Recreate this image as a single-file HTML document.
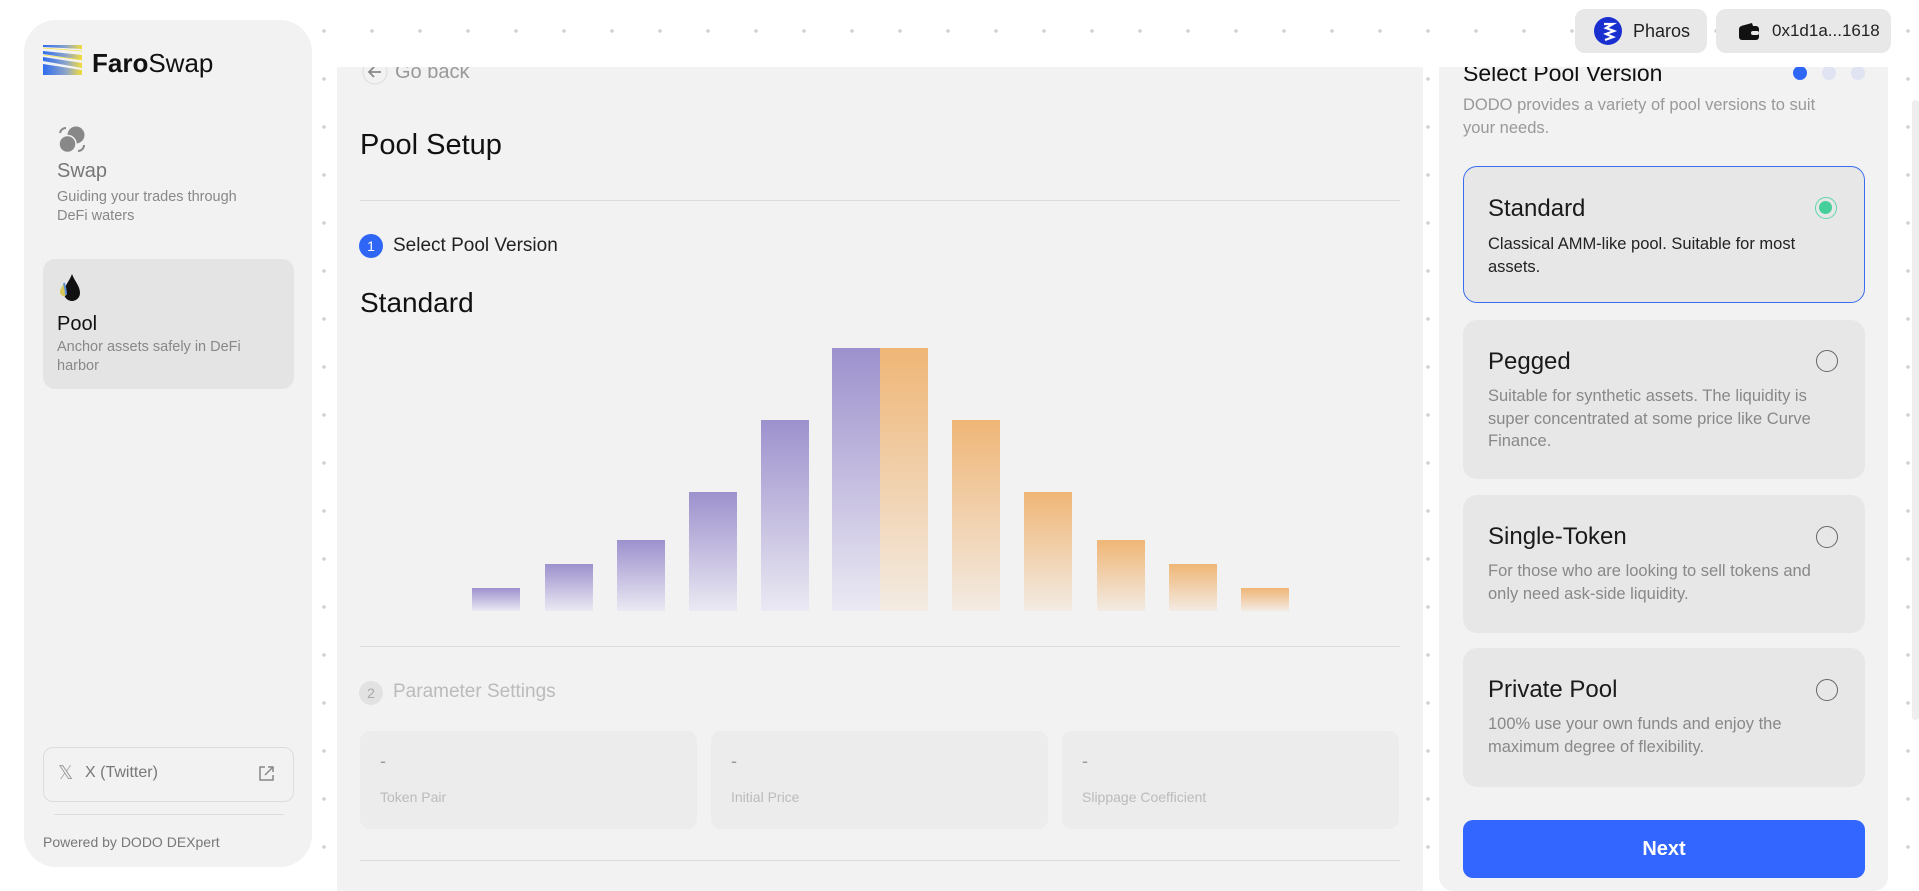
<!DOCTYPE html>
<html><head><meta charset="utf-8"><style>
*{box-sizing:border-box;margin:0;padding:0}
body{width:1919px;height:891px;overflow:hidden;position:relative;font-family:"Liberation Sans",sans-serif;background:#fff;
background-image:radial-gradient(circle,#cfcfcf 1.7px,transparent 1.9px);background-size:48px 48px;background-position:12px 7px}
.abs{position:absolute}
.side{left:24px;top:20px;width:288px;height:847px;background:#f2f2f2;border-radius:32px}
.main{left:337px;top:67px;width:1086px;height:824px;background:#f2f2f2;overflow:hidden}
.rp{left:1439px;top:67px;width:449px;height:824px;background:#f2f2f2;border-radius:0 0 14px 14px;overflow:hidden}
.hdr{left:0;top:0;width:1919px;height:67px}
.btn{background:#e8e8e8;border-radius:10px;display:flex;align-items:center;font-size:18px;color:#222}
.card{position:absolute;left:24px;width:402px;background:#e7e7e7;border-radius:14px}
.card h3{position:absolute;left:25px;font-size:24px;font-weight:normal;color:#1a1a1a}
.card p{position:absolute;left:25px;width:350px;font-size:16.5px;line-height:22.5px;color:#888}
.radio{position:absolute;right:27px;width:22px;height:22px;border:1.5px solid #666;border-radius:50%}
.bar{position:absolute;bottom:0;width:48px}
.pu{background:linear-gradient(#9d91cd,#ebe9f3)}
.or{background:linear-gradient(#efb676,#f3ebe3)}
.pbox{position:absolute;top:664px;width:337px;height:98px;background:#ececec;border-radius:10px}
.pbox .d{position:absolute;left:20px;top:20px;font-size:18px;color:#999}
.pbox .l{position:absolute;left:20px;top:58px;font-size:14px;color:#bbb}
</style></head><body>
<div class="abs hdr"></div>
<div class="abs btn" style="left:1575px;top:9px;width:132px;height:44px;padding-left:19px">
<svg width="28" height="28" viewBox="0 0 28 28"><circle cx="14" cy="14" r="14" fill="#1a2fd0"/><path d="M10 7h9l-7 4 8 3-8 3 7 3-8 3" stroke="#fff" stroke-width="2.2" fill="none"/></svg>
<span style="margin-left:11px">Pharos</span></div>
<div class="abs btn" style="left:1716px;top:9px;width:175px;height:44px;padding-left:22px">
<svg width="22" height="18" viewBox="0 0 22 18"><path d="M3 4l11-3 1 3z" fill="#111"/><rect x="1" y="4" width="20" height="14" rx="3" fill="#111"/><rect x="13" y="9" width="8" height="4" rx="2" fill="#e8e8e8"/></svg>
<span style="margin-left:12px;font-size:17px">0x1d1a...1618</span></div>

<div class="abs side">
<svg class="abs" style="left:19px;top:25px" width="39" height="30" viewBox="0 0 39 30">
<defs><linearGradient id="lg" x1="0" x2="1"><stop offset="0" stop-color="#2f6cf0"/><stop offset="0.6" stop-color="#8fa6c8"/><stop offset="1" stop-color="#f3dc3a"/></linearGradient></defs>
<path d="M0 0h39v4L0 2zM0 6l39 4v5L0 9zM0 12l39 6v5L0 16zM0 19l39 6v5H0z" fill="url(#lg)"/>
<path d="M0 3l39 3v-2M0 10l39 5" stroke="#f5e24a" stroke-width="0.8" fill="none"/></svg>
<div class="abs" style="left:68px;top:28px;font-size:26px;color:#111"><b>Faro</b>Swap</div>
<svg class="abs" style="left:34px;top:106px" width="28" height="27" viewBox="0 0 28 27"><circle cx="18" cy="9" r="8.5" fill="#888"/><circle cx="9.5" cy="18" r="8.5" fill="#888" stroke="#f2f2f2" stroke-width="1.5"/><path d="M2 7a6 6 0 0 1 6-5M26 19a6 6 0 0 1-6 6" stroke="#888" stroke-width="2" fill="none"/></svg>
<div class="abs" style="left:33px;top:140px;font-size:20px;color:#777">Swap</div>
<div class="abs" style="left:33px;top:168px;font-size:14.5px;line-height:19px;color:#888;width:200px">Guiding your trades through DeFi waters</div>
<div class="abs" style="left:19px;top:239px;width:251px;height:130px;background:#e4e4e4;border-radius:12px">
<svg class="abs" style="left:14px;top:15px" width="26" height="30" viewBox="0 0 26 30"><path d="M15 0C12 8 7 12 7 19a8 8 0 0 0 16 0c0-7-5-11-8-19z" fill="#111"/><path d="M7 9C5 13 3 15 3 18a4 4 0 0 0 6 3.5C8 16 9 13 7 9z" fill="#d8c85a"/><path d="M7 9c1 4 2 7 2 12" stroke="#5a8fd8" stroke-width="2" fill="none"/></svg>
<div class="abs" style="left:14px;top:54px;font-size:20px;color:#111">Pool</div>
<div class="abs" style="left:14px;top:79px;font-size:14.5px;line-height:19px;color:#888;width:210px">Anchor assets safely in DeFi harbor</div></div>
<div class="abs" style="left:19px;top:727px;width:251px;height:55px;border:1px solid #dcdcdc;border-radius:10px">
<div class="abs" style="left:14px;top:14px;font-size:19px;color:#999">𝕏</div>
<div class="abs" style="left:41px;top:16px;font-size:16px;color:#777">X (Twitter)</div>
<svg class="abs" style="left:215px;top:18px" width="15" height="15" viewBox="0 0 15 15"><path d="M6 1H1v13h13V9M9 1h5v5M14 1L6 9" stroke="#888" stroke-width="1.5" fill="none"/></svg></div>
<div class="abs" style="left:30px;top:794px;width:230px;height:1px;background:#ddd"></div>
<div class="abs" style="left:19px;top:814px;font-size:14px;color:#777">Powered by DODO DEXpert</div>
</div>

<div class="abs main">
<svg class="abs" style="left:25px;top:-8px" width="26" height="26" viewBox="0 0 26 26"><circle cx="13" cy="13" r="12" fill="none" stroke="#ddd"/><path d="M19 13H7M12 8l-5 5 5 5" stroke="#888" stroke-width="1.8" fill="none"/></svg>
<div class="abs" style="left:58px;top:-6px;font-size:20px;color:#999">Go back</div>
<div class="abs" style="left:23px;top:62px;font-size:29px;color:#111">Pool Setup</div>
<div class="abs" style="left:23px;top:133px;width:1040px;height:1px;background:#ddd"></div>
<div class="abs" style="left:22px;top:167px;width:24px;height:24px;border-radius:50%;background:#2f66f5;color:#fff;font-size:14px;text-align:center;line-height:24px">1</div>
<div class="abs" style="left:56px;top:168px;font-size:19px;color:#222">Select Pool Version</div>
<div class="abs" style="left:23px;top:220px;font-size:28px;color:#111">Standard</div>
<div class="abs" style="left:0;top:0;width:1086px;height:544px">
<div class="bar pu" style="left:135px;height:23px"></div>
<div class="bar pu" style="left:208px;height:47px"></div>
<div class="bar pu" style="left:280px;height:71px"></div>
<div class="bar pu" style="left:352px;height:119px"></div>
<div class="bar pu" style="left:424px;height:191px"></div>
<div class="bar pu" style="left:495px;height:263px"></div>
<div class="bar or" style="left:543px;height:263px"></div>
<div class="bar or" style="left:615px;height:191px"></div>
<div class="bar or" style="left:687px;height:119px"></div>
<div class="bar or" style="left:760px;height:71px"></div>
<div class="bar or" style="left:832px;height:47px"></div>
<div class="bar or" style="left:904px;height:23px"></div>
</div>
<div class="abs" style="left:23px;top:579px;width:1040px;height:1px;background:#ddd"></div>
<div class="abs" style="left:22px;top:614px;width:24px;height:24px;border-radius:50%;background:#e2e2e2;color:#aaa;font-size:14px;text-align:center;line-height:24px">2</div>
<div class="abs" style="left:56px;top:614px;font-size:19px;color:#bbb">Parameter Settings</div>
<div class="pbox" style="left:23px"><div class="d">-</div><div class="l">Token Pair</div></div>
<div class="pbox" style="left:374px"><div class="d">-</div><div class="l">Initial Price</div></div>
<div class="pbox" style="left:725px"><div class="d">-</div><div class="l">Slippage Coefficient</div></div>
<div class="abs" style="left:23px;top:793px;width:1040px;height:1px;background:#ddd"></div>
</div>

<div class="abs rp">
<div class="abs" style="left:24px;top:-7px;font-size:23px;color:#111">Select Pool Version</div>
<div class="abs" style="left:354px;top:-1px;width:14px;height:14px;border-radius:50%;background:#2f66f5"></div>
<div class="abs" style="left:383px;top:-1px;width:14px;height:14px;border-radius:50%;background:#dfe3f2"></div>
<div class="abs" style="left:412px;top:-1px;width:14px;height:14px;border-radius:50%;background:#dfe3f2"></div>
<div class="abs" style="left:24px;top:27px;width:360px;font-size:16.5px;line-height:23px;color:#999">DODO provides a variety of pool versions to suit your needs.</div>
<div class="card" style="top:99px;height:137px;border:1.5px solid #3a6cf2">
<h3 style="top:28px;left:24px">Standard</h3><p style="top:66px;left:24px;color:#222">Classical AMM-like pool. Suitable for most assets.</p>
<div class="radio" style="top:30px;border-color:#5fd6a8;padding:3px"><div style="width:13px;height:13px;border-radius:50%;background:#45cf9a"></div></div></div>
<div class="card" style="top:253px;height:159px"><h3 style="top:28px">Pegged</h3><p style="top:65px">Suitable for synthetic assets. The liquidity is super concentrated at some price like Curve Finance.</p><div class="radio" style="top:30px"></div></div>
<div class="card" style="top:428px;height:138px"><h3 style="top:28px">Single-Token</h3><p style="top:65px">For those who are looking to sell tokens and only need ask-side liquidity.</p><div class="radio" style="top:31px"></div></div>
<div class="card" style="top:581px;height:139px"><h3 style="top:28px">Private Pool</h3><p style="top:65px">100% use your own funds and enjoy the maximum degree of flexibility.</p><div class="radio" style="top:31px"></div></div>
<div class="abs" style="left:24px;top:753px;width:402px;height:58px;background:#3366ff;border-radius:10px;color:#fff;font-size:20px;font-weight:bold;text-align:center;line-height:58px">Next</div>
</div>
<div class="abs" style="left:1912px;top:100px;width:7px;height:620px;background:#eee;border-radius:4px"></div>
</body></html>
